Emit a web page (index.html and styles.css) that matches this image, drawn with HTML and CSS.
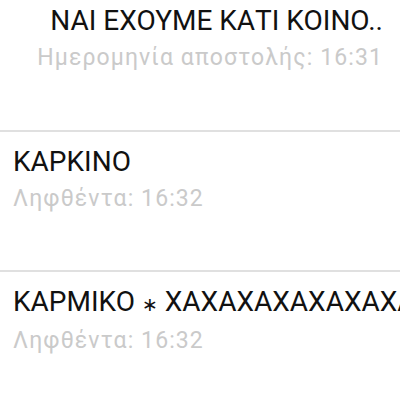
FILE: index.html
```html
<!DOCTYPE html>
<html lang="el">
<head>
    <meta charset="UTF-8">
    <meta name="viewport" content="width=device-width, initial-scale=1.0">
    <title>Μηνύματα</title>
    <link rel="stylesheet" href="styles.css">
</head>
<body>

<div class="thread">
    <!-- Sent message -->
    <div class="message sent first">
        <p class="body">ΝΑΙ ΕΧΟΥΜΕ ΚΑΤΙ ΚΟΙΝΟ..</p>
        <p class="meta">Ημερομηνία αποστολής: 16:31</p>
    </div>

    <!-- Received messages -->
    <div class="message received">
        <p class="body">ΚΑΡΚΙΝΟ</p>
        <p class="meta">Ληφθέντα: 16:32</p>
    </div>

    <div class="message received">
        <p class="body">ΚΑΡΜΙΚΟ <span class="star">∗</span> ΧΑΧΑΧΑΧΑΧΑΧΑΧΑΧΑ</p>
        <p class="meta">Ληφθέντα: 16:32</p>
    </div>
</div>

</body>
</html>
```
FILE: styles.css
```css
body {
    font-family: Roboto, "Noto Sans", sans-serif;
    margin: 0;
    padding: 0;
    background: #fff;
    overflow: hidden;
}

.thread {
    width: 400px;
    height: 403px;
    overflow: hidden;
}

.message {
    height: 140px;
    border-bottom: 2px solid #e0e0e0;
    padding: 12px 0 0 13px;
    box-sizing: border-box;
}

.message.first {
    height: 132px;
    padding-top: 3px;
}

.message.sent {
    text-align: right;
    padding-right: 17px;
}

.message .body {
    margin: 0;
    font-size: 28px;
    line-height: 36px;
    color: #111;
    white-space: nowrap;
    overflow: hidden;
}

.message .star {
    font-family: "DejaVu Sans", sans-serif;
    font-size: 19px;
}

.message .meta {
    margin: 4px 0 0;
    font-size: 23px;
    line-height: 30px;
    letter-spacing: 1.1px;
    color: #cacaca;
    white-space: nowrap;
}
```
